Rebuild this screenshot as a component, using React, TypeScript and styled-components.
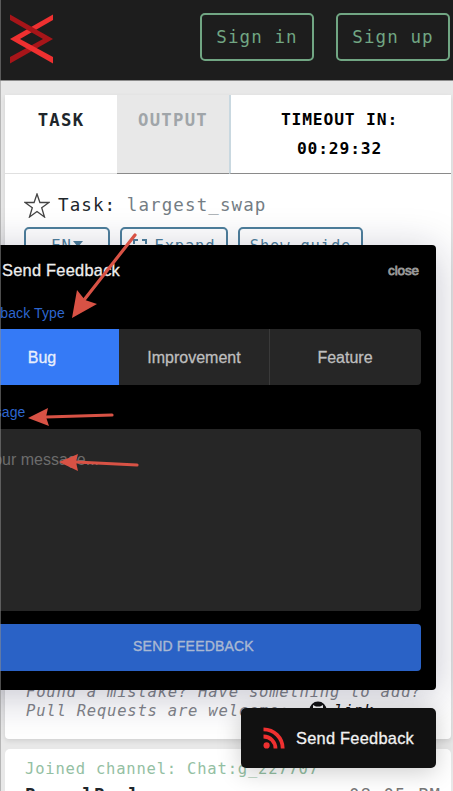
import React from 'react';
import styled, { createGlobalStyle } from 'styled-components';

const MONO = '"DejaVu Sans Mono", "Liberation Mono", monospace';
const SANS = '"Liberation Sans", Arial, sans-serif';

const GlobalStyle = createGlobalStyle`
  * { box-sizing: border-box; }
  body { margin: 0; background: #e8e8e8; overflow: hidden; }
  button { margin: 0; padding: 0; cursor: pointer; }
`;

const Page = styled.div`
  position: relative;
  width: 453px;
  height: 791px;
  overflow: hidden;
  background: #e8e8e8;
  font-family: ${MONO};
  color: #20262b;
`;

const LeftEdge = styled.div`
  position: absolute;
  inset: 0 auto 0 0;
  width: 1px;
  background: rgba(140, 140, 140, 0.55);
  z-index: 6;
`;

const Header = styled.header`
  height: 81px;
  display: flex;
  align-items: flex-start;
  padding: 13px 3px 0 9px;
  background: #1d1d1d;
  border-bottom: 1px solid #8c8c8c;
`;

const Logo = styled.svg`
  width: 45px;
  height: 50px;
  margin-top: 1px;
  margin-right: auto;
`;

const AuthButton = styled.button`
  width: 114px;
  height: 48px;
  margin-left: 22px;
  border: 2px solid #71a683;
  border-radius: 5px;
  background: transparent;
  color: #71a683;
  font: 17.5px ${MONO};
  letter-spacing: 1.1px;
  white-space: nowrap;
`;

const Panel = styled.section`
  width: 446px;
  height: 644px;
  margin: 14px 0 0 5px;
  display: flex;
  flex-direction: column;
  background: #fff;
  border-radius: 0 0 4px 4px;
  box-shadow: 0 2px 5px rgba(0, 0, 0, 0.1);
`;

const Tabs = styled.div`
  display: flex;
  height: 79px;
  flex: none;
`;

const Tab = styled.div<{ $kind: 'active' | 'idle' | 'timer' }>`
  width: ${p => (p.$kind === 'active' ? 112 : p.$kind === 'idle' ? 112 : 222)}px;
  padding: ${p => (p.$kind === 'timer' ? '10px 3px 0 0' : '11px 0 0')};
  text-align: center;
  font-weight: bold;
  font-size: ${p => (p.$kind === 'timer' ? 16.3 : 17.3)}px;
  line-height: 29px;
  letter-spacing: ${p => (p.$kind === 'timer' ? 0.85 : 1.25)}px;
  color: ${p => (p.$kind === 'active' ? '#20262b' : p.$kind === 'idle' ? '#a0a5a9' : '#000')};
  background: ${p => (p.$kind === 'idle' ? '#e8e8e8' : '#fff')};
  border-bottom: 1px solid ${p => (p.$kind === 'active' ? '#e0e0e0' : '#8a8a8a')};
  border-left: ${p => (p.$kind === 'timer' ? '2px solid #c9d8e0' : '0')};
`;

const TaskTitle = styled.h1`
  display: flex;
  align-items: center;
  height: 26px;
  margin: 18px 0 0 19px;
  font-size: 17.5px;
  font-weight: normal;
  letter-spacing: 1.1px;
  white-space: pre;
`;

const Star = styled.svg`
  width: 26px;
  height: 25px;
  margin-right: 8px;
`;

const TaskName = styled.span`
  margin-left: -1px;
  color: #747d84;
`;

const ToolRow = styled.div`
  display: flex;
  gap: 10px;
  margin: 9px 0 0 19px;
`;

const ToolButton = styled.button<{ $width: number }>`
  width: ${p => p.$width}px;
  height: 34px;
  display: flex;
  align-items: center;
  justify-content: center;
  gap: 8px;
  border: 2px solid #4e7f9c;
  border-radius: 5px;
  background: #fff;
  color: #4e7f9c;
  font: 15.5px ${MONO};
  letter-spacing: 0.8px;
  padding-top: 3px;
  white-space: nowrap;
`;

const Caret = styled.span`
  margin: -3px 0 0 -7px;
  border: 5px solid transparent;
  border-top: 6px solid currentColor;
  border-bottom: 0;
`;

const Note = styled.p`
  margin: auto 0 18px 21px;
  font-size: 15.5px;
  line-height: 19px;
  font-style: italic;
  letter-spacing: 0.8px;
  color: #828489;
  white-space: pre;
`;

const NoteLink = styled.a`
  color: #111;
`;

const ChatPanel = styled.section`
  width: 446px;
  height: 80px;
  margin: 10px 0 0 5px;
  padding: 10px 10px 0 20px;
  border-radius: 5px;
  background: #fff;
  font-size: 15.5px;
  line-height: 20px;
  letter-spacing: 0.8px;
`;

const Joined = styled.div`
  color: #94c0a3;
`;

const ChatLine = styled.div`
  display: flex;
  justify-content: space-between;
  margin-top: 6px;
  color: #777;
  font-size: 17.3px;
  letter-spacing: 1.1px;
`;

const Author = styled.strong`
  color: #20262b;
`;

const Dialog = styled.div`
  position: absolute;
  left: -47px;
  top: 245px;
  width: 483px;
  height: 445px;
  padding: 15px 15px 19px;
  display: flex;
  flex-direction: column;
  border-radius: 4px;
  background: #000;
  box-shadow: 0 6px 42px rgba(20, 20, 60, 0.25);
  font-family: ${SANS};
  z-index: 2;
`;

const DialogHead = styled.div`
  display: flex;
  justify-content: space-between;
  height: 20px;
  padding: 0 2px 0 34px;
  line-height: 21px;
  color: #eee;
  font-size: 16.4px;
  letter-spacing: 0.25px;
  -webkit-text-stroke: 0.3px;
`;

const Close = styled.span`
  color: #999;
  font-size: 13.5px;
  letter-spacing: -0.1px;
  -webkit-text-stroke: 0.8px;
`;

const Label = styled.label<{ $top: number }>`
  height: 20px;
  margin-top: ${p => p.$top}px;
  line-height: 20px;
  font-size: 14px;
  letter-spacing: 0.1px;
  color: #2d66cf;
`;

const Options = styled.div`
  display: grid;
  grid-template-columns: 151px 151px 151px;
  height: 56px;
  margin-top: 6px;
  border-radius: 4px;
  overflow: hidden;
`;

const Option = styled.button<{ $selected?: boolean }>`
  padding: 2px 0 0;
  border: 0;
  border-right: 1px solid ${p => (p.$selected ? '#357af6' : '#3a3a3a')};
  background: ${p => (p.$selected ? '#357af6' : '#262626')};
  color: ${p => (p.$selected ? '#e9effc' : '#bebebe')};
  font: 16px ${SANS};
  -webkit-text-stroke: 0.3px;
  &:first-child { padding-right: 2px; }
  &:last-child { border-right: 0; padding-right: 1px; }
`;

const Message = styled.textarea`
  display: block;
  width: 453px;
  height: 182px;
  margin-top: 7px;
  padding: 21px 16px;
  border: 0;
  border-radius: 4px;
  resize: none;
  background: #262626;
  font: 16px/20px ${SANS};
  &::placeholder { color: #6c6c6c; opacity: 1; }
`;

const Submit = styled.button`
  height: 47px;
  margin-top: 13px;
  flex: none;
  border: 0;
  border-radius: 4px;
  background: #2a62c6;
  color: #a9b8d2;
  font: 14px ${SANS};
  letter-spacing: 0.2px;
  padding: 0 2px 3px 0;
  -webkit-text-stroke: 0.4px;
`;

const FeedbackButton = styled.button`
  position: absolute;
  left: 241px;
  top: 708px;
  width: 195px;
  height: 60px;
  display: flex;
  align-items: center;
  padding-left: 22px;
  gap: 11px;
  border: 0;
  border-radius: 5px;
  background: #111;
  color: #f2f2f2;
  font: 16.4px ${SANS};
  letter-spacing: 0.25px;
  white-space: nowrap;
  -webkit-text-stroke: 0.3px;
  box-shadow: 0 4px 24px rgba(0, 0, 0, 0.2);
  z-index: 3;
`;

const Arrows = styled.svg`
  position: absolute;
  left: 0;
  top: 220px;
  width: 180px;
  height: 260px;
  z-index: 5;
`;

const OctocatIcon = styled.svg`
  width: 18px;
  height: 18px;
  margin: -3px 7px 0 -1px;
  vertical-align: -3px;
`;

const arrows = [
  { line: 'M135 15L84 80', head: '72,98 77,70 85,80 97,84' },
  { line: 'M112 195L46 197', head: '28,198 48,188 46,197 49,206' },
  { line: 'M137 245L76 242', head: '59,242 78,234 76,242 78,251' },
];

export default function App() {
  return (
    <Page>
      <GlobalStyle />
      <Header>
        <Logo viewBox="0 0 45 50" preserveAspectRatio="none">
          <path d="M1 43L34 25H44L1 49.5Z" fill="#a71519" />
          <path d="M44 0.5V6L11 25H1Z" fill="#ef3030" />
          <path d="M1 0.5L44 25H34L1 6Z" fill="#a71519" />
          <path d="M1 25H11L44 43V49.5Z" fill="#ef3030" />
        </Logo>
        <AuthButton>Sign in</AuthButton>
        <AuthButton>Sign up</AuthButton>
      </Header>

      <Panel>
        <Tabs>
          <Tab $kind="active">TASK</Tab>
          <Tab $kind="idle">OUTPUT</Tab>
          <Tab $kind="timer">TIMEOUT IN:<br />00:29:32</Tab>
        </Tabs>
        <TaskTitle>
          <Star viewBox="0 0 26 25" fill="none" stroke="#444" strokeWidth="1.3">
            <path d="M13 1L15.9 9.5H25L17.7 14.8L20.5 24L13 18.5L5.5 24L8.3 14.8L1 9.5H10.1Z" />
          </Star>
          Task: <TaskName>largest_swap</TaskName>
        </TaskTitle>
        <ToolRow>
          <ToolButton $width={86}>EN<Caret /></ToolButton>
          <ToolButton $width={108}>
            <svg width="14" height="14" fill="none" stroke="currentColor" strokeWidth="2">
              <path d="M1 5V1H5M9 1H13V5M13 9V13H9M5 13H1V9" />
            </svg>
            Expand
          </ToolButton>
          <ToolButton $width={125}>Show guide</ToolButton>
        </ToolRow>
        <Note>
          {'Found a mistake? Have something to add?\nPull Requests are welcome:  '}
          <NoteLink>
            <OctocatIcon viewBox="0 0 18 18">
              <circle cx="9" cy="9" r="8.5" fill="#111" />
              <path d="M4 4L7 5.5H11L14 4V9Q14 12 9 12T4 9Z" fill="#fff" />
            </OctocatIcon>
            link
          </NoteLink>
        </Note>
      </Panel>

      <ChatPanel>
        <Joined>Joined channel: Chat:g_227707</Joined>
        <ChatLine>
          <Author>PascalPaul</Author>
          <span>08:05 PM</span>
        </ChatLine>
      </ChatPanel>

      <Dialog>
        <DialogHead>
          <span>Send Feedback</span>
          <Close>close</Close>
        </DialogHead>
        <Label $top={23}>Feedback Type</Label>
        <Options>
          <Option $selected>Bug</Option>
          <Option>Improvement</Option>
          <Option>Feature</Option>
        </Options>
        <Label $top={17}>Message</Label>
        <Message placeholder="Your message..." />
        <Submit>SEND FEEDBACK</Submit>
      </Dialog>

      <FeedbackButton>
        <svg width="22" height="22" viewBox="0 0 22 22" fill="none" stroke="#ef3030" strokeWidth="3.8">
          <circle cx="3.6" cy="18.4" r="3.1" fill="#ef3030" stroke="none" />
          <path d="M0.5 9.5A12 12 0 0 1 12.5 21.5M0.5 2.3A19.2 19.2 0 0 1 19.7 21.5" />
        </svg>
        Send Feedback
      </FeedbackButton>

      <Arrows viewBox="0 0 180 260" fill="#d85245" stroke="#d85245">
        {arrows.map(a => (
          <g key={a.line}>
            <path d={a.line} strokeWidth="3.2" strokeLinecap="round" />
            <polygon points={a.head} stroke="none" />
          </g>
        ))}
      </Arrows>
      <LeftEdge />
    </Page>
  );
}
